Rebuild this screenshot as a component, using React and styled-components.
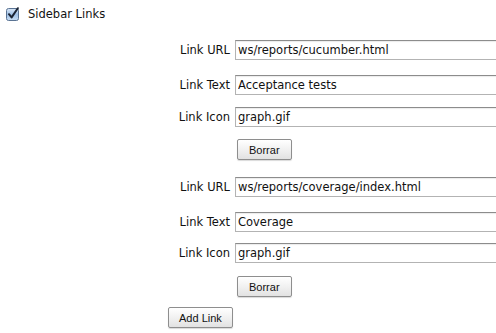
import React from "react";
import styled, { createGlobalStyle } from "styled-components";

const Global = createGlobalStyle`
  html, body {
    margin: 0;
    padding: 0;
    background: #fff;
    overflow: hidden;
  }
  body {
    font-family: "DejaVu Sans", Verdana, sans-serif;
    font-size: 11.5px;
    color: #111;
  }
`;

const Page = styled.div`
  width: 496px;
  height: 333px;
  overflow: hidden;
`;

const Header = styled.div`
  display: flex;
  align-items: center;
  gap: 8px;
  height: 14px;
  padding: 7px 0 0 6px;
`;

const HeaderText = styled.span`
  font-size: 11.5px;
  line-height: 14px;
`;

const Form = styled.div`
  padding-top: 19px;
`;

const Row = styled.div`
  display: flex;
  align-items: flex-start;
  height: ${(p) => p.$h}px;
`;

const Label = styled.div`
  flex: 0 0 235px;
  text-align: right;
  padding-right: 5px;
  box-sizing: border-box;
  line-height: 20px;
  font-size: 11.5px;
  white-space: nowrap;
`;

const Input = styled.input`
  flex: 0 0 400px;
  width: 400px;
  height: 20px;
  box-sizing: border-box;
  margin: 0;
  padding: 0 2px;
  font-family: "DejaVu Sans", Verdana, sans-serif;
  font-size: 11.5px;
  color: #111;
  border: 1px solid #b3b3b3;
  border-top-color: #8c8c8c;
  box-shadow: inset 0 1px 1px rgba(0, 0, 0, 0.08);
  outline: none;
`;

const Button = styled.button`
  margin: 0 0 0 ${(p) => p.$left}px;
  height: 21px;
  padding: 0 ${(p) => p.$pad}px;
  font-family: "Liberation Sans", Arial, sans-serif;
  font-size: 11px;
  font-weight: 500;
  color: #111;
  background: linear-gradient(#ffffff, #f1f1f1 50%, #e2e2e2);
  border: 1px solid #8e8e8e;
  border-radius: 2px;
  box-shadow: 0 1px 1px rgba(0, 0, 0, 0.15);
  cursor: pointer;
`;

const Check = () => (
  <svg width="14" height="14" viewBox="0 0 14 14">
    <defs>
      <linearGradient id="cb" x1="0" y1="0" x2="0" y2="1">
        <stop offset="0" stopColor="#dbe8f7" />
        <stop offset="0.5" stopColor="#9fc0e6" />
        <stop offset="1" stopColor="#c8ddf3" />
      </linearGradient>
    </defs>
    <rect x="0.5" y="1.5" width="12" height="12" rx="2" fill="url(#cb)" stroke="#5a7393" />
    <path d="M3 7.2 L5.6 10.4 L11.8 1.2" fill="none" stroke="#1a2333" strokeWidth="2" strokeLinecap="round" strokeLinejoin="round" />
  </svg>
);

const blocks = [
  {
    url: "ws/reports/cucumber.html",
    text: "Acceptance tests",
    icon: "graph.gif",
    h: [35, 32, 32, 38],
  },
  {
    url: "ws/reports/coverage/index.html",
    text: "Coverage",
    icon: "graph.gif",
    h: [35, 31, 33, 31],
  },
];

const Block = ({ b }) => (
  <>
    <Row $h={b.h[0]}>
      <Label>Link URL</Label>
      <Input defaultValue={b.url} />
    </Row>
    <Row $h={b.h[1]}>
      <Label>Link Text</Label>
      <Input defaultValue={b.text} />
    </Row>
    <Row $h={b.h[2]}>
      <Label>Link Icon</Label>
      <Input defaultValue={b.icon} />
    </Row>
    <Row $h={b.h[3]}>
      <Button $left={237} $pad={11}>Borrar</Button>
    </Row>
  </>
);

export default function App() {
  return (
    <Page>
      <Global />
      <Header>
        <Check />
        <HeaderText>Sidebar Links</HeaderText>
      </Header>
      <Form>
        {blocks.map((b, i) => (
          <Block key={i} b={b} />
        ))}
        <Row $h={26}>
          <Button $left={168} $pad={10}>Add Link</Button>
        </Row>
      </Form>
    </Page>
  );
}
